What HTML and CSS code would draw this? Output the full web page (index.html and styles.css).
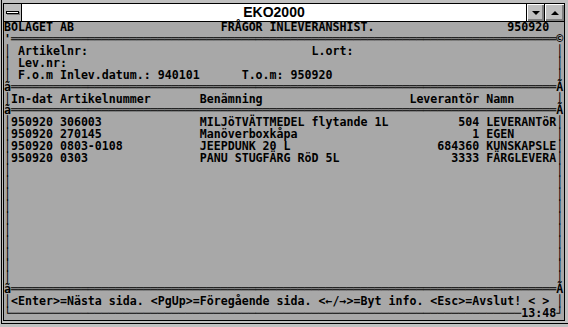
FILE: index.html
```html
<html>
<head>
<link rel="stylesheet" href="styles.css">
</head>
<body>
<div class="window">
<div class="inner">
	<div class="titlebar">
		<div class="sysmenu"><span class="sysbar"></span></div>
		<div class="title">EKO2000</div>
		<div class="btn btn-min"><span class="arrow-down"></span></div>
		<div class="btn btn-max"><span class="arrow-up"></span></div>
	</div>
<pre class="screen">
BOLAGET AB                     FRÅGOR INLEVERANSHIST.                   950920
'══════════════════════════════════════════════════════════════════════════════©
│ Artikelnr:                                L.ort:                             │
│ Lev.nr:                                                                      │
│ F.o.m Inlev.datum.: 940101      T.o.m: 950920                                │
ã══════════════════════════════════════════════════════════════════════════════Ã
│In-dat Artikelnummer       Benämning                     Leverantör Namn      │
ã══════════════════════════════════════════════════════════════════════════════Ã
│950920 306003              MILJöTVÄTTMEDEL flytande 1L          504 LEVERANTöR│
│950920 270145              Manöverboxkåpa                         1 EGEN      │
│950920 0803-0108           JEEPDUNK 20 L                     684360 KUNSKAPSLE│
│950920 0303                PANU STUGFÄRG RöD 5L                3333 FÄRGLEVERA│
│                                                                              │
│                                                                              │
│                                                                              │
│                                                                              │
│                                                                              │
│                                                                              │
│                                                                              │
│                                                                              │
│                                                                              │
│                                                                              │
ã══════════════════════════════════════════════════════════════════════════════Ã
│&lt;Enter&gt;=Nästa sida. &lt;PgUp&gt;=Föregående sida. &lt;←/→&gt;=Byt info. &lt;Esc&gt;=Avslut! &lt; &gt; │
└─────────────────────────────────────────────────────────────────────────13:48┘</pre>
</div>
</div>
</body>
</html>
```

FILE: styles.css
```css
body {
	margin: 0;
	background-color: #c0c0c0;
	overflow: hidden;
}

.window {
	width: 562px;
	margin-left: 1px;
	padding: 3px 3px 2px 1px;
	border-left: 1px solid #000;
	border-bottom: 1px solid #000;
}

.inner {
	border: 1px solid #000;
	background-color: #a8a8a8;
}

.titlebar {
	display: flex;
	height: 17px;
	background-color: #fff;
	border-bottom: 1px solid #000;
}

.sysmenu {
	width: 17px;
	border-right: 1px solid #000;
	background-color: #c0c0c0;
	display: flex;
	align-items: center;
	justify-content: center;
}

.sysbar {
	width: 11px;
	height: 1px;
	background-color: #fff;
	border: 1px solid #000;
	box-shadow: 1px 1px 0 #808080;
}

.title {
	flex: 1;
	text-align: center;
	font-family: "Liberation Sans", Arial, sans-serif;
	font-weight: bold;
	font-size: 14px;
	line-height: 17px;
	color: #000;
}

.btn {
	border-left: 1px solid #000;
	background-color: #c0c0c0;
	box-shadow: inset 1px 1px 0 #fff, inset -1px -1px 0 #808080, inset -2px -2px 0 #808080;
	display: flex;
	align-items: center;
	justify-content: center;
}

.btn-min {
	width: 17px;
}

.btn-max {
	width: 19px;
}

.arrow-down {
	width: 0;
	height: 0;
	border-left: 4px solid transparent;
	border-right: 4px solid transparent;
	border-top: 4px solid #000;
}

.arrow-up {
	width: 0;
	height: 0;
	border-left: 4px solid transparent;
	border-right: 4px solid transparent;
	border-bottom: 4px solid #000;
}

.screen {
	margin: 0;
	height: 298px;
	white-space: pre;
	font-family: "DejaVu Sans Mono", monospace;
	font-weight: bold;
	font-size: 11.625px;
	line-height: 11.92px;
	color: #000;
	background-color: #a8a8a8;
}
```
